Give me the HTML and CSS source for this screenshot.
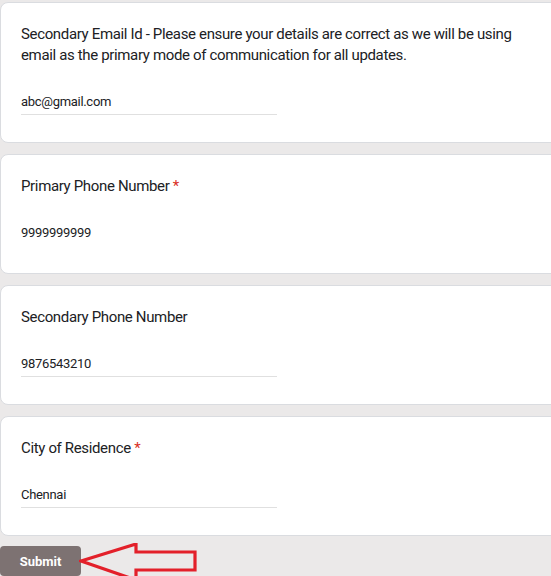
FILE: index.html
```html
<!DOCTYPE html>
<html>
<head>
<meta charset="utf-8">
<link rel="stylesheet" href="styles.css">
</head>
<body>
<div class="page">
  <div class="card">
    <div class="label">Secondary Email Id - Please ensure your details are correct as we will be using email as the primary mode of communication for all updates.</div>
    <div class="field"><span class="value">abc@gmail.com</span></div>
  </div>
  <div class="card">
    <div class="label">Primary Phone Number <span class="req">*</span></div>
    <div class="field field-plain"><span class="value">9999999999</span></div>
  </div>
  <div class="card">
    <div class="label">Secondary Phone Number</div>
    <div class="field"><span class="value">9876543210</span></div>
  </div>
  <div class="card">
    <div class="label">City of Residence <span class="req">*</span></div>
    <div class="field"><span class="value">Chennai</span></div>
  </div>
  <div class="actions">
    <button class="submit">Submit</button>
    <svg class="arrow" width="130" height="40" viewBox="0 0 130 40">
      <polygon points="2,18 57,1 57,9 116,9 116,27 57,27 57,37" fill="none" stroke="#e3202a" stroke-width="3.2" stroke-linejoin="miter"/>
    </svg>
  </div>
</div>
</body>
</html>
```
FILE: styles.css
```css
html, body {
  margin: 0;
  padding: 0;
  background: #ebe9e9;
  overflow: hidden;
}
.page {
  display: flex;
  flex-direction: column;
  gap: 11px;
  padding-top: 2px;
  width: 562px;
  font-family: Roboto, "Liberation Sans", sans-serif;
}
.card {
  background: #fff;
  border: 1px solid #dadce0;
  border-radius: 8px;
  padding: 21px 20px 27px 20px;
}
.label {
  font-size: 15px;
  line-height: 21px;
  color: #202124;
  letter-spacing: -0.35px;
  width: 515px;
}
.req {
  color: #d93025;
}
.field {
  margin-top: 26px;
  width: 256px;
  padding-bottom: 2px;
  border-bottom: 1px solid #e0e0e0;
}
.field-plain {
  border-bottom-color: transparent;
}
.value {
  display: block;
  font-size: 13px;
  line-height: 20px;
  letter-spacing: -0.3px;
  color: #202124;
}
.actions {
  position: relative;
  margin-top: -1px;
  height: 40px;
}
.submit {
  display: block;
  width: 81px;
  height: 30px;
  border: none;
  border-radius: 4px;
  background: #7d7272;
  color: #fff;
  font-family: Roboto, "Liberation Sans", sans-serif;
  font-weight: bold;
  font-size: 13px;
  padding: 0;
}
.arrow {
  position: absolute;
  left: 79px;
  top: -3px;
}
```
